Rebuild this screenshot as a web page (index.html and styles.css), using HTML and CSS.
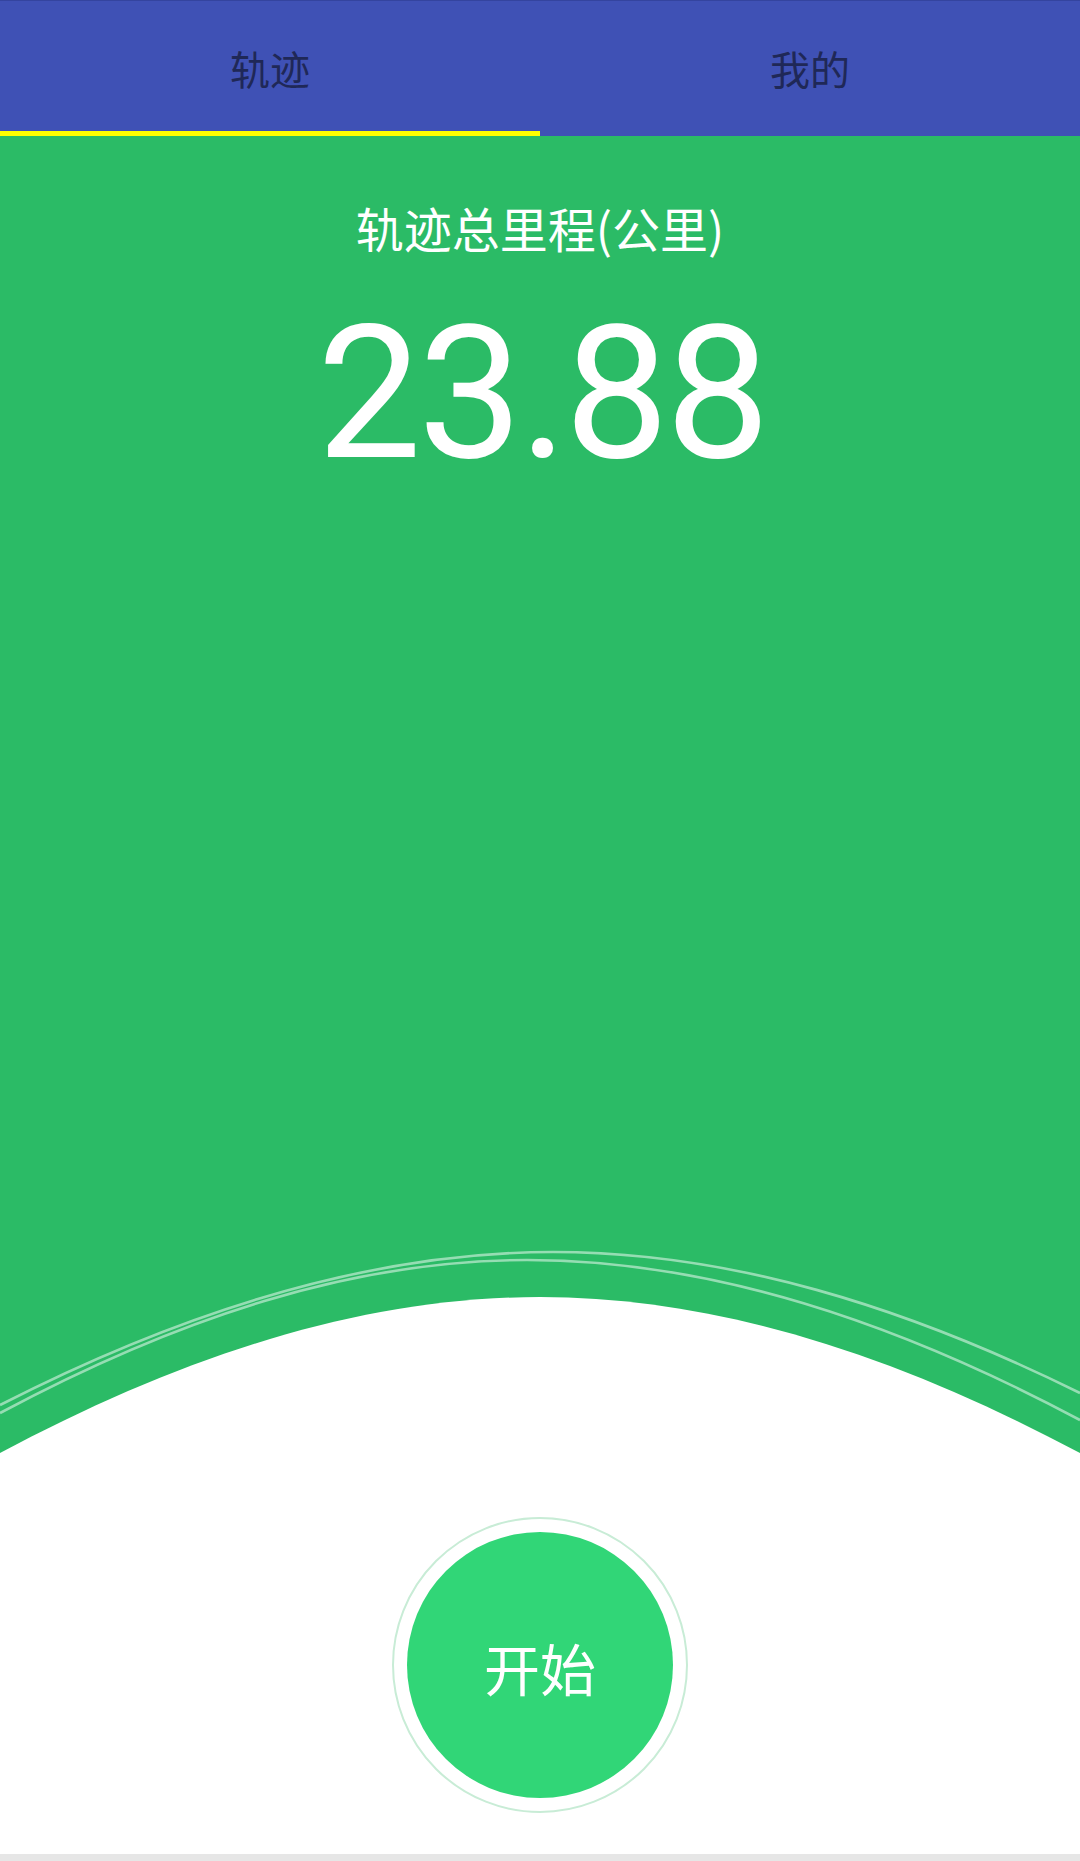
FILE: index.html
```html
<!DOCTYPE html>
<html lang="zh-CN">
<head>
<meta charset="utf-8">
<title>轨迹</title>
<link rel="stylesheet" href="styles.css">
</head>
<body>
<div class="app">
  <nav class="tabs">
    <div class="tab tab-active">
      <span class="tab-label">轨迹</span>
      <span class="tab-indicator"></span>
    </div>
    <div class="tab">
      <span class="tab-label">我的</span>
      <span class="tab-indicator"></span>
    </div>
  </nav>
  <main class="stage">
    <div class="stats">
      <div class="stats-title">轨迹总里程(公里)</div>
      <div class="stats-value">23.88</div>
    </div>
    <svg class="wave" viewBox="0 1240 1080 220" width="1080" height="220" preserveAspectRatio="none" aria-hidden="true">
      <path class="ring" d="M0,1405 C184,1311 369,1252 553,1252 C729,1252 904,1306 1080,1393"/>
      <path class="ring" d="M0,1413 C176,1319 351,1260 527,1260 C711,1260 896,1322 1080,1420"/>
      <path class="hill" d="M0,1453 C180,1357 360,1297 540,1297 C720,1297 900,1357 1080,1453 L1080,1461 L0,1461 Z"/>
    </svg>
  </main>
  <section class="actions">
    <button class="start-ring" type="button">
      <span class="start-btn">开始</span>
    </button>
  </section>
  <div class="bottom-line"></div>
</div>
</body>
</html>
```
FILE: styles.css
```css
html, body {
  margin: 0;
  padding: 0;
  height: 100%;
}
body {
  font-family: "Noto Sans CJK SC", "Noto Sans", Roboto, sans-serif;
  background: #ffffff;
  overflow: hidden;
}
.app {
  display: flex;
  flex-direction: column;
  height: 1861px;
  width: 1080px;
}
.tabs {
  display: flex;
  height: 136px;
  box-sizing: border-box;
  border-top: 1px solid #34449f;
  background: #3f51b5;
  flex: none;
}
.tab {
  flex: 1;
  display: flex;
  flex-direction: column;
}
.tab-label {
  flex: 1;
  display: flex;
  align-items: center;
  justify-content: center;
  padding-top: 3px;
  font-size: 40px;
  line-height: 48px;
  color: #1f2857;
}
.tab-indicator {
  height: 5px;
  flex: none;
}
.tab-active .tab-indicator {
  background: #ffff00;
}
.stage {
  flex: 1;
  display: flex;
  flex-direction: column;
  justify-content: space-between;
  background: #2bbb66;
  min-height: 0;
}
.stats {
  display: flex;
  flex-direction: column;
  align-items: center;
  padding-top: 63px;
  color: #ffffff;
}
.stats-title {
  font-size: 48px;
  line-height: 56px;
}
.stats-value {
  margin-top: 45px;
  padding-left: 3.5px;
  font-family: Roboto, "Noto Sans", sans-serif;
  font-size: 186px;
  line-height: 186px;
  font-weight: 400;
  letter-spacing: -3.5px;
}
.wave {
  display: block;
  width: 1080px;
  height: 220px;
  flex: none;
}
.ring {
  fill: none;
  stroke: rgba(255, 255, 255, 0.5);
  stroke-width: 2.6;
}
.hill {
  fill: #ffffff;
}
.actions {
  height: 394px;
  flex: none;
  display: flex;
  justify-content: center;
  align-items: flex-start;
  padding-top: 57px;
  box-sizing: border-box;
  background: #ffffff;
}
.start-ring {
  width: 296px;
  height: 296px;
  box-sizing: border-box;
  padding: 13px;
  margin: 0;
  border: 2px solid #c8ecd6;
  border-radius: 50%;
  background: #ffffff;
  display: flex;
  cursor: pointer;
}
.start-btn {
  flex: 1;
  display: flex;
  align-items: center;
  justify-content: center;
  border-radius: 50%;
  background: #31d677;
  color: #ffffff;
  font-family: "Noto Sans CJK SC", sans-serif;
  font-size: 56px;
  line-height: 64px;
  padding-top: 4px;
}
.bottom-line {
  height: 7px;
  flex: none;
  background: #e6e6e6;
}
```
